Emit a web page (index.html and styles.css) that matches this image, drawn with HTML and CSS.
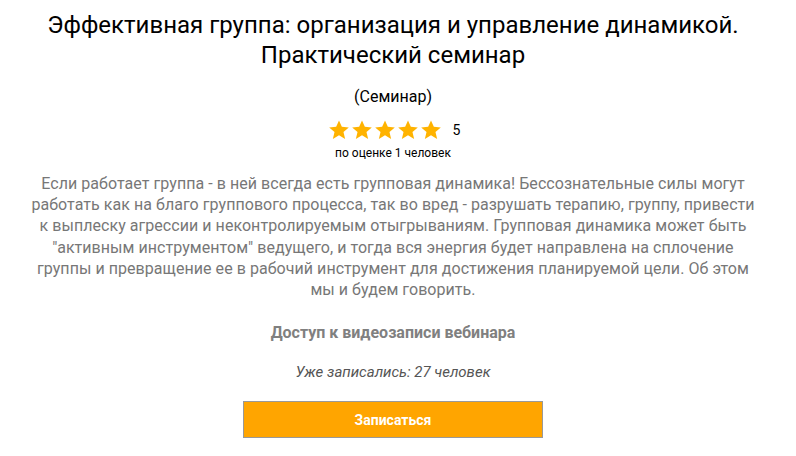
FILE: index.html
```html
<!DOCTYPE html>
<html lang="ru">
<head>
<meta charset="utf-8">
<link rel="stylesheet" href="styles.css">
</head>
<body>
<main class="card">
  <h1 class="title">Эффективная группа: организация и управление динамикой. Практический семинар</h1>
  <div class="type">(Семинар)</div>
  <div class="rating">
    <div class="stars">
      <svg class="star" viewBox="0 0 24 24"><path d="M12 1.5l3.1 7 7.6.7-5.8 5 1.8 7.5L12 17.8l-6.7 3.9 1.8-7.5-5.8-5 7.6-.7z"/></svg>
      <svg class="star" viewBox="0 0 24 24"><path d="M12 1.5l3.1 7 7.6.7-5.8 5 1.8 7.5L12 17.8l-6.7 3.9 1.8-7.5-5.8-5 7.6-.7z"/></svg>
      <svg class="star" viewBox="0 0 24 24"><path d="M12 1.5l3.1 7 7.6.7-5.8 5 1.8 7.5L12 17.8l-6.7 3.9 1.8-7.5-5.8-5 7.6-.7z"/></svg>
      <svg class="star" viewBox="0 0 24 24"><path d="M12 1.5l3.1 7 7.6.7-5.8 5 1.8 7.5L12 17.8l-6.7 3.9 1.8-7.5-5.8-5 7.6-.7z"/></svg>
      <svg class="star" viewBox="0 0 24 24"><path d="M12 1.5l3.1 7 7.6.7-5.8 5 1.8 7.5L12 17.8l-6.7 3.9 1.8-7.5-5.8-5 7.6-.7z"/></svg>
    </div>
    <span class="score">5</span>
  </div>
  <div class="votes">по оценке 1 человек</div>
  <p class="desc">Если работает группа - в ней всегда есть групповая динамика! Бессознательные силы могут работать как на благо группового процесса, так во вред - разрушать терапию, группу, привести к выплеску агрессии и неконтролируемым отыгрываниям. Групповая динамика может быть "активным инструментом" ведущего, и тогда вся энергия будет направлена на сплочение группы и превращение ее в рабочий инструмент для достижения планируемой цели. Об этом мы и будем говорить.</p>
  <div class="access">Доступ к видеозаписи вебинара</div>
  <div class="count">Уже записались: 27 человек</div>
  <button class="btn">Записаться</button>
</main>
</body>
</html>
```

FILE: styles.css
```css
html, body {
  margin: 0;
  padding: 0;
  background: #fff;
}
body {
  font-family: Roboto, "Noto Sans", sans-serif;
  color: #000;
}
.card {
  display: flex;
  flex-direction: column;
  align-items: center;
  padding: 10px 29px 0 19px;
  text-align: center;
}
.title {
  margin: 0;
  font-size: 24px;
  font-weight: 400;
  line-height: 30px;
  max-width: 720px;
}
.type {
  margin-top: 17px;
  font-size: 16px;
  line-height: 20px;
}
.rating {
  display: flex;
  align-items: center;
  margin-top: 12px;
  margin-left: 2px;
}
.stars {
  display: flex;
  gap: 1px;
}
.star {
  width: 22px;
  height: 22px;
  fill: #FFB300;
}
.score {
  margin-left: 11px;
  font-size: 14px;
}
.votes {
  margin-top: 5px;
  font-size: 12px;
  line-height: 15px;
}
.desc {
  margin: 12px 0 0;
  font-size: 16px;
  line-height: 21.2px;
  color: #777;
  max-width: 728px;
  letter-spacing: 0.05px;
}
.access {
  margin-top: 23px;
  font-size: 16px;
  font-weight: 700;
  color: #808080;
}
.count {
  margin-top: 21px;
  font-size: 15px;
  font-style: italic;
  color: #555;
}
.btn {
  margin-top: 20px;
  width: 300px;
  height: 37px;
  background: #FFA500;
  border: 1px solid #999;
  color: #fff;
  font-family: Roboto, sans-serif;
  font-size: 14px;
  font-weight: 700;
  cursor: pointer;
}
```
